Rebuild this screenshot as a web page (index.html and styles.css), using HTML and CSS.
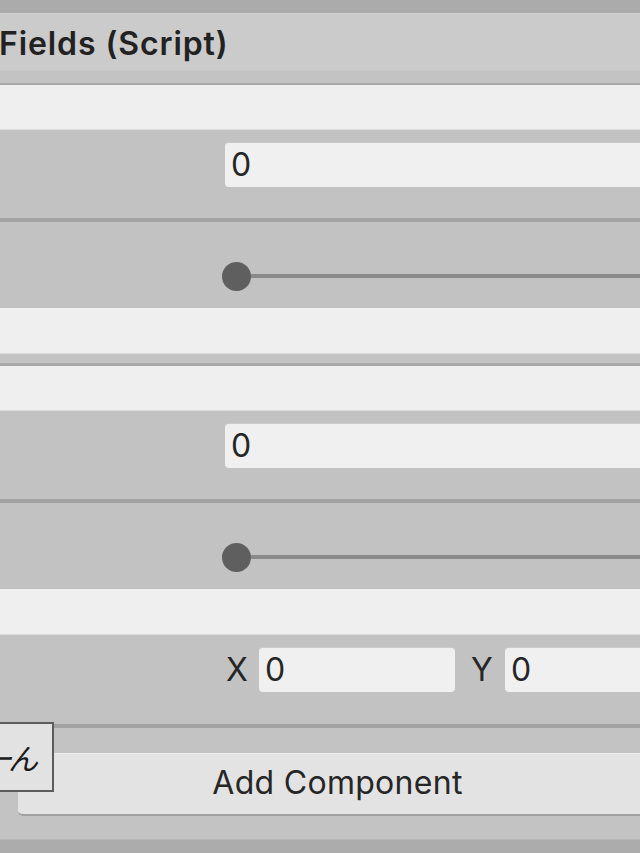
FILE: index.html
```html
<!DOCTYPE html>
<html>
<head>
<meta charset="utf-8">
<link rel="stylesheet" href="styles.css">
</head>
<body>
<div class="inspector">
  <div class="topbar"></div>
  <div class="header"><span class="title">Fields (Script)</span></div>
  <div class="header-gap"></div>
  <div class="bar bar-a"></div>
  <div class="row field-row"><div class="field wide">0</div></div>
  <div class="sep"></div>
  <div class="row slider-row"><span class="thumb"></span><span class="track"></span></div>
  <div class="bar bar-b"></div>
  <div class="bar-gap"></div>
  <div class="bar bar-c"></div>
  <div class="row field-row"><div class="field wide">0</div></div>
  <div class="sep"></div>
  <div class="row slider-row"><span class="thumb"></span><span class="track"></span></div>
  <div class="bar bar-b"></div>
  <div class="row xy-row">
    <span class="axis axis-x">X</span><div class="field xfield">0</div>
    <span class="axis axis-y">Y</span><div class="field wide">0</div>
  </div>
  <div class="sep"></div>
  <div class="btn-area"><div class="add-btn">Add Component</div></div>
  <div class="bottombar"></div>
  <div class="ime-box"><span class="ime-text">ーん</span></div>
</div>
</body>
</html>
```

FILE: styles.css
```css
html, body {
  margin: 0;
  padding: 0;
  width: 640px;
  height: 853px;
  overflow: hidden;
  background: #c2c2c2;
}
.inspector {
  position: relative;
  display: flex;
  flex-direction: column;
  width: 640px;
  height: 853px;
  overflow: hidden;
  font-family: Inter, "Noto Sans", sans-serif;
  color: #1c1c1c;
}
.topbar {
  height: 13px;
  background: #acabac;
  flex: none;
}
.header {
  height: 56px;
  background: #cbcbcb;
  border-top: 1px solid #d0d0d0;
  flex: none;
  display: flex;
  align-items: center;
}
.title {
  font-size: 32px;
  font-weight: 600;
  letter-spacing: 0.9px;
  line-height: 32px;
  margin-left: -1px;
  padding-top: 3px;
  color: #222222;
}
.header-gap {
  height: 12px;
  background: #c3c3c3;
  border-top: 1px solid #c8c8c8;
  border-bottom: 2px solid #a9a9a9;
  flex: none;
}
.bar {
  background: #efefef;
  flex: none;
}
.bar-a { height: 44px; border-bottom: 1px solid #dcdcdc; }
.bar-b { height: 45px; border-bottom: 1px solid #dcdcdc; }
.bar-c { height: 44px; border-bottom: 1px solid #dcdcdc; }
.bar-gap {
  height: 9px;
  background: #c3c3c3;
  border-bottom: 3px solid #a8a8a8;
  flex: none;
}
.row {
  flex: none;
  display: flex;
  align-items: flex-start;
}
.field-row {
  height: 76px;
  padding: 12px 0 0 225px;
}
.field {
  height: 45px;
  box-sizing: border-box;
  background: #f0f0f0;
  border-radius: 4px;
  border-top: 1px solid #c9c9c9;
  font-size: 32px;
  line-height: 44px;
  padding-left: 6px;
  color: #262626;
}
.wide {
  flex: 1;
  margin-right: -20px;
}
.sep {
  height: 4px;
  background: #a2a2a2;
  flex: none;
}
.slider-row {
  height: 86px;
  padding-left: 222px;
  align-items: center;
}
.thumb {
  width: 29px;
  height: 29px;
  border-radius: 50%;
  background: #5f5f5f;
  flex: none;
  margin-top: 22px;
}
.track {
  flex: 1;
  height: 4px;
  background: #8a8a8a;
  margin-top: 22px;
  margin-right: -20px;
}
.xy-row {
  height: 77px;
  padding-top: 12px;
  padding-left: 224px;
}
.axis {
  font-size: 32px;
  line-height: 45px;
  color: #262626;
  flex: none;
}
.axis-x { width: 35px; padding-left: 2px; box-sizing: border-box; }
.axis-y { width: 50px; padding-left: 16px; box-sizing: border-box; }
.xfield {
  width: 196px;
  flex: none;
}
.btn-area {
  flex: none;
  height: 111px;
  box-sizing: border-box;
  padding: 25px 0 0 18px;
  background: #c3c3c3;
}
.add-btn {
  width: 639px;
  height: 63px;
  box-sizing: border-box;
  background: #e3e3e3;
  border-radius: 5px;
  border-bottom: 2px solid #a0a0a0;
  border-top: 1px solid #ececec;
  font-size: 32px;
  line-height: 58px;
  letter-spacing: 0.3px;
  text-align: center;
  color: #262626;
}
.bottombar {
  flex: none;
  height: 15px;
  background: #acacac;
  border-top: 1px solid #b8b8b8;
}
.ime-box {
  position: absolute;
  left: -60px;
  top: 722px;
  width: 110px;
  height: 66px;
  background: #e2e2e2;
  border: 2px solid #5c5c5c;
  display: flex;
  align-items: center;
  justify-content: flex-end;
  overflow: hidden;
}
.ime-text {
  font-family: "Noto Sans CJK JP", sans-serif;
  font-size: 30px;
  font-style: italic;
  color: #1a1a1a;
  padding-right: 18px;
  letter-spacing: -4px;
}
```
